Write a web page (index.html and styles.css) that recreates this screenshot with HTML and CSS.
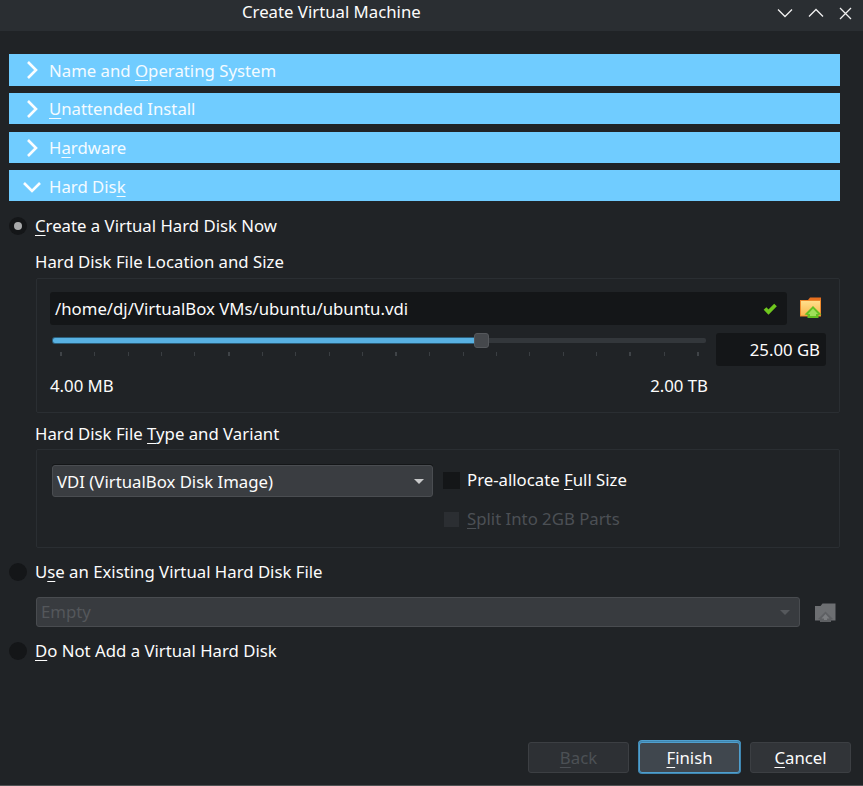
FILE: index.html
```html
<!DOCTYPE html>
<html lang="en">
<head>
<meta charset="utf-8">
<title>Create Virtual Machine</title>
<link rel="stylesheet" href="styles.css">
</head>
<body>
<div class="window">
  <header class="titlebar">
    <span class="title">Create Virtual Machine</span>
    <div class="winbtns">
      <svg width="16" height="10" viewBox="0 0 16 10"><path d="M1 1.500 8 8.500 15 1.500" class="wstroke"/></svg>
      <svg width="16" height="10" viewBox="0 0 16 10"><path d="M1 8.500 8 1.500 15 8.500" class="wstroke"/></svg>
      <svg width="13" height="13" viewBox="0 0 13 13"><path d="M1 1 12 12M12 1 1 12" class="wstroke"/></svg>
    </div>
  </header>
  <main class="content">
    <div class="sections">
      <div class="sec sec-first"><svg class="chev" width="14" height="18" viewBox="0 0 14 18"><path d="M3 1 11 9 3 17"/></svg><span>Name and <u>O</u>perating System</span></div>
      <div class="sec sec-a"><svg class="chev" width="14" height="18" viewBox="0 0 14 18"><path d="M3 1 11 9 3 17"/></svg><span><u>U</u>nattended Install</span></div>
      <div class="sec sec-b"><svg class="chev" width="14" height="18" viewBox="0 0 14 18"><path d="M3 1 11 9 3 17"/></svg><span>H<u>a</u>rdware</span></div>
      <div class="sec sec-a sec-last"><svg class="chev chev-open" width="18" height="12" viewBox="0 0 18 12"><path d="M1 1 9 9 17 1"/></svg><span>Hard Dis<u>k</u></span></div>
    </div>

    <label class="radio-row row-create"><span class="radio on"><i></i></span><span><u>C</u>reate a Virtual Hard Disk Now</span></label>

    <div class="indent">
      <div class="group-title t1">Hard Disk File Location and Size</div>
      <section class="group g1">
        <div class="loc-row">
          <div class="path-input"><span>/home/dj/VirtualBox VMs/ubuntu/ubuntu.vdi</span>
            <svg width="16" height="14" viewBox="0 0 16 14"><path d="M3 6.500 6.500 10 13.500 3" fill="none" stroke="#6fc71e" stroke-width="3.800"/></svg>
          </div>
          <svg class="folder" width="23" height="23" viewBox="0 0 23 23">
            <defs>
              <linearGradient id="fold" x1="0" y1="0" x2="0" y2="1">
                <stop offset="0" stop-color="#ffdf8c"/>
                <stop offset="1" stop-color="#fbb74e"/>
              </linearGradient>
            </defs>
            <path d="M9 3 11 0.500H22V5H9Z" fill="#e8701f"/>
            <rect x="1" y="3" width="21" height="16.500" fill="#ee8a2c"/>
            <rect x="2" y="4" width="19" height="14.500" fill="url(#fold)"/>
            <path d="M14 9 22.500 17.500 19.500 18V21H8.500V18L5.500 17.500Z" fill="#63bf22"/>
            <path d="M14 11.500 19 17H17V19H11V17H9Z" fill="#9ee05a"/>
          </svg>
        </div>
        <div class="size-row">
          <div class="slider">
            <div class="track"><div class="fill"></div><div class="rest"></div><div class="handle"></div></div>
            <div class="ticks"><i class="d"></i><i></i><i></i><i></i><i></i><i class="d"></i><i></i><i></i><i></i><i></i><i class="d"></i><i></i><i></i><i></i><i></i><i></i><i></i><i class="d"></i><i></i><i class="d"></i></div>
          </div>
          <div class="spin">25.00 GB</div>
        </div>
        <div class="range"><span>4.00 MB</span><span>2.00 TB</span></div>
      </section>

      <div class="group-title t2">Hard Disk File <u>T</u>ype and Variant</div>
      <section class="group g2">
        <div class="combo"><span>VDI (VirtualBox Disk Image)</span><i class="caret"></i></div>
        <div class="checks">
          <label class="check"><span class="box"></span><span>Pre-allocate <u>F</u>ull Size</span></label>
          <label class="check off"><span class="box"></span><span><u>S</u>plit Into 2GB Parts</span></label>
        </div>
      </section>
    </div>

    <label class="radio-row row-existing"><span class="radio"></span><span>U<u>s</u>e an Existing Virtual Hard Disk File</span></label>
    <div class="existing">
      <div class="combo-off"><span>Empty</span><i class="caret"></i></div>
      <svg width="23" height="23" viewBox="0 0 23 23">
        <path d="M1 19.500V5H6.500L8.500 2.500H21.500V19.500H17L11.500 13 6 19.500Z" fill="#6d6f72"/>
        <path d="M4 18 11.500 10.500 19 18 17 18.500V21H6V18.500Z" fill="#5e6063"/>
        <path d="M7.500 17.500 11.500 13 15.500 17.500H13V19H10V17.500Z" fill="#7b7d80"/>
      </svg>
    </div>
    <label class="radio-row row-none"><span class="radio"></span><span><u>D</u>o Not Add a Virtual Hard Disk</span></label>

    <footer class="buttons">
      <div class="btn btn-off"><span><u>B</u>ack</span></div>
      <div class="btn btn-default"><span><u>F</u>inish</span></div>
      <div class="btn"><span><u>C</u>ancel</span></div>
    </footer>
  </main>
</div>
</body>
</html>
```

FILE: styles.css
```css
* { box-sizing: border-box; }
html, body { margin: 0; padding: 0; }
body {
  width: 863px;
  height: 786px;
  overflow: hidden;
  background: #202326;
  color: #fcfcfc;
  font: 16.75px/22px "Noto Sans", sans-serif;
}
u { text-decoration-thickness: 1px; text-underline-offset: 3px; }
.window { height: 786px; display: flex; flex-direction: column; border-bottom: 1px solid #505254; }

.titlebar {
  height: 31px;
  flex: none;
  display: flex;
  align-items: center;
  background: #2a2e32;
}
.title { margin-left: 242px; line-height: 24px; margin-top: -7px; }
.winbtns { margin-left: auto; display: flex; align-items: center; gap: 15px; padding-right: 11px; margin-top: -5px; }
.wstroke { fill: none; stroke: #f0f0f0; stroke-width: 1.300; }

.content { flex: 1; display: flex; flex-direction: column; padding: 23px 23px 12px 9px; }

.sections { display: flex; flex-direction: column; }
.sec {
  height: 31px;
  background: #70ccff;
  display: flex;
  align-items: center;
  position: relative;
  padding-left: 40px;
  color: #f4fbff;
}
.sec-first { height: 32px; padding-top: 1px; }
.sec-last { padding-top: 2px; }
.sec-a { margin-top: 7px; }
.sec-b { margin-top: 8px; }
.chev { position: absolute; left: 16px; top: 7px; }
.chev-open { left: 14px; top: 12px; }
.chev path { fill: none; stroke: #fafdff; stroke-width: 2.600; }

.radio-row { display: flex; align-items: center; height: 22px; gap: 8px; }
.row-create { margin-top: 14px; }
.row-existing { margin-top: 13px; }
.row-none { margin-top: 13px; }
.radio {
  width: 18px;
  height: 18px;
  border-radius: 50%;
  background: #141618;
  display: flex;
  align-items: center;
  justify-content: center;
}
.radio i { width: 8px; height: 8px; border-radius: 50%; background: #a8a9aa; }

.indent { margin-left: 27px; }
.group-title { height: 22px; margin-left: -1px; }
.t1 { margin-top: 14px; }
.t2 { margin-top: 10px; }
.group { border: 1px solid #2a2e32; border-radius: 2px; }
.g1 { height: 135px; margin-top: 5px; padding: 13px 12px 0 13px; }
.g2 { height: 99px; margin-top: 4px; padding: 15px 0 0 15px; display: flex; align-items: flex-start; }

.loc-row { display: flex; align-items: center; }
.path-input {
  width: 737px;
  height: 33px;
  background: #141618;
  border-radius: 3px;
  display: flex;
  align-items: center;
  justify-content: space-between;
  padding: 0 9px 0 5px;
}
.folder { margin-left: 12px; flex: none; }

.size-row { display: flex; margin-top: 8px; }
.slider { width: 666px; padding: 5px 0 0 3px; position: relative; }
.track { height: 5px; width: 653px; display: flex; position: relative; }
.fill { width: 421px; background: #58b1e2; border-radius: 2px 0 0 2px; box-shadow: 0 0 0 1px #2b5e7a; }
.rest { margin-left: 15px; flex: 1; background: #33373b; border-radius: 0 2px 2px 0; }
.handle {
  position: absolute;
  left: 421px;
  top: -5px;
  width: 15px;
  height: 15px;
  border-radius: 3px;
  background: #45484c;
  border: 1px solid #55585c;
}
.ticks { display: flex; justify-content: space-between; width: 639px; margin: 9px 0 0 7px; }
.ticks i { width: 1px; height: 4px; background: #3a3e42; }
.ticks i.d { background: #3f4347; width: 2px; }
.spin {
  width: 110px;
  height: 33px;
  background: #141618;
  border-radius: 3px;
  text-align: right;
  line-height: 33px;
  padding-right: 6px;
}
.range { display: flex; width: 658px; justify-content: space-between; margin-top: 9px; }

.combo {
  width: 381px;
  height: 32px;
  border: 1px solid #4a4d51;
  border-radius: 3px;
  background: #3a3d41;
  display: flex;
  align-items: center;
  justify-content: space-between;
  padding: 1px 8px 0 4px;
  box-shadow: 0 -1px 0 #141618;
}
.caret { width: 0; height: 0; border-left: 5px solid transparent; border-right: 5px solid transparent; border-top: 5px solid #c8c9ca; }
.checks { margin-left: 10px; display: flex; flex-direction: column; gap: 17px; padding-top: 4px; }
.check { display: flex; align-items: center; gap: 7px; height: 22px; }
.box { width: 17px; height: 17px; background: #141618; }
.off { color: #4c5055; }
.off .box { background: #2b2e32; width: 15px; height: 15px; margin: 0 1px; }

.existing { display: flex; align-items: center; margin: 14px 0 0 27px; }
.combo-off {
  width: 764px;
  height: 30px;
  border: 1px solid #494c50;
  border-radius: 3px;
  background: #383b3f;
  color: #54575b;
  display: flex;
  align-items: center;
  justify-content: space-between;
  padding: 0 9px 0 4px;
  margin-right: 14px;
}
.combo-off .caret { border-top-color: #55585c; }

.buttons { margin-top: auto; display: flex; justify-content: flex-end; gap: 10px; margin-right: -11px; }
.btn {
  width: 101px;
  height: 31px;
  border: 1px solid #3c3f43;
  border-radius: 3px;
  background: #313438;
  display: flex;
  align-items: center;
  justify-content: center;
  padding-top: 1px;
}
.btn-off { background: #2d3034; color: #4c5055; }
.btn-default { background: #40474e; border-color: #4f9fce; box-shadow: 0 0 0 1px #3f86b0, 0 -1px 0 1px #4f9fce; }
```
